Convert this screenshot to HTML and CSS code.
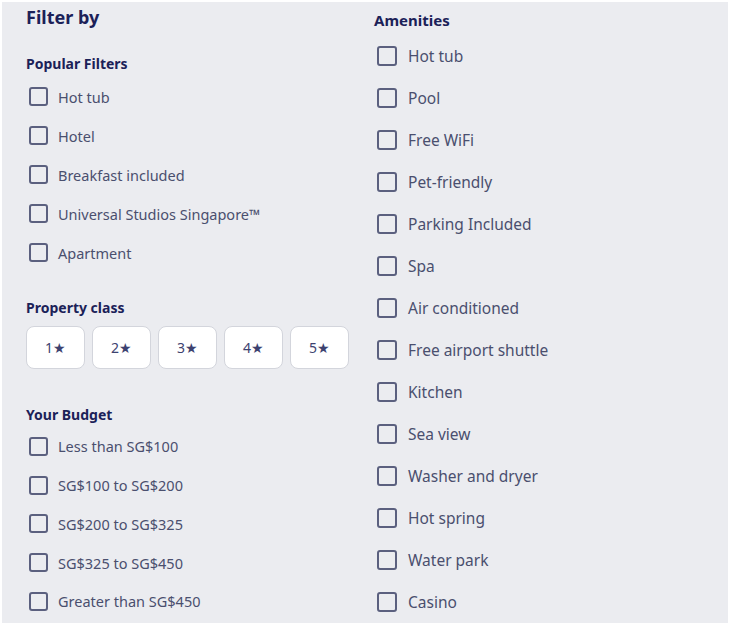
FILE: index.html
```html
<!DOCTYPE html>
<html>
<head>
    <meta charset="utf-8">
    <meta name="viewport" content="width=device-width, initial-scale=1">
    <title>Filter by</title>
    <link rel="stylesheet" href="styles.css">
</head>
<body>
    <div class="page">
        <div class="left">
            <h2 class="title">Filter by</h2>

            <h3 class="group">Popular Filters</h3>
            <ul class="checks">
                <li><span class="box"></span>Hot tub</li>
                <li><span class="box"></span>Hotel</li>
                <li><span class="box"></span>Breakfast included</li>
                <li><span class="box"></span>Universal Studios Singapore™</li>
                <li><span class="box"></span>Apartment</li>
            </ul>

            <h3 class="group class-title">Property class</h3>
            <div class="stars">
                <button>1★</button>
                <button>2★</button>
                <button>3★</button>
                <button>4★</button>
                <button>5★</button>
            </div>

            <h3 class="group budget-title">Your Budget</h3>
            <ul class="checks budget">
                <li><span class="box"></span>Less than SG$100</li>
                <li><span class="box"></span>SG$100 to SG$200</li>
                <li><span class="box"></span>SG$200 to SG$325</li>
                <li><span class="box"></span>SG$325 to SG$450</li>
                <li><span class="box"></span>Greater than SG$450</li>
            </ul>
        </div>

        <div class="right">
            <h3 class="group amen-title">Amenities</h3>
            <ul class="checks amen">
                <li><span class="box"></span>Hot tub</li>
                <li><span class="box"></span>Pool</li>
                <li><span class="box"></span>Free WiFi</li>
                <li><span class="box"></span>Pet-friendly</li>
                <li><span class="box"></span>Parking Included</li>
                <li><span class="box"></span>Spa</li>
                <li><span class="box"></span>Air conditioned</li>
                <li><span class="box"></span>Free airport shuttle</li>
                <li><span class="box"></span>Kitchen</li>
                <li><span class="box"></span>Sea view</li>
                <li><span class="box"></span>Washer and dryer</li>
                <li><span class="box"></span>Hot spring</li>
                <li><span class="box"></span>Water park</li>
                <li><span class="box"></span>Casino</li>
            </ul>
        </div>
    </div>
</body>
</html>
```

FILE: styles.css
```css
html, body {
  margin: 0;
  background: #fff;
}

.page {
  display: flex;
  height: 621px;
  overflow: hidden;
  background: #ebecf0;
  border-top: 2px solid #fff;
  border-left: 2px solid #fff;
  border-right: 1px solid #fff;
  font-family: "Noto Sans", "Open Sans", sans-serif;
  color: #4a4f6e;
}

.left {
  width: 348px;
  padding-left: 24px;
}
.right {
  padding-left: 0;
}

.title {
  margin: 3px 0 0;
  font-size: 18px;
  line-height: 24px;
  font-weight: 700;
  color: #1b2158;
}

.group {
  margin: 25px 0 0;
  font-size: 14px;
  line-height: 20px;
  font-weight: 700;
  color: #1b2158;
}

.checks {
  list-style: none;
  margin: 3px 0 0;
  padding: 0;
}
.checks li {
  display: flex;
  align-items: center;
  gap: 10px;
  height: 39px;
  padding-left: 3px;
  font-size: 14.5px;
}
.box {
  box-sizing: border-box;
  width: 19px;
  height: 19px;
  border: 2px solid #5b607f;
  border-radius: 3px;
}

.class-title {
  margin-top: 26px;
}
.stars {
  display: flex;
  gap: 7px;
  margin-top: 8px;
}
.stars button {
  width: 59px;
  height: 43px;
  background: #fff;
  border: 1px solid #d3d5dc;
  border-radius: 8px;
  font-family: inherit;
  font-size: 14px;
  color: #3d4270;
}

.budget-title {
  margin-top: 36px;
}
.budget {
  margin-top: 2px;
}
.budget li {
  height: 38.75px;
}

.amen-title {
  margin-top: 8px;
  font-size: 15px;
}
.amen {
  margin-top: 5px;
}
.amen li {
  height: 42px;
  padding-left: 3px;
  gap: 11px;
  font-size: 15.5px;
}
.amen .box {
  width: 20px;
  height: 20px;
}
```
